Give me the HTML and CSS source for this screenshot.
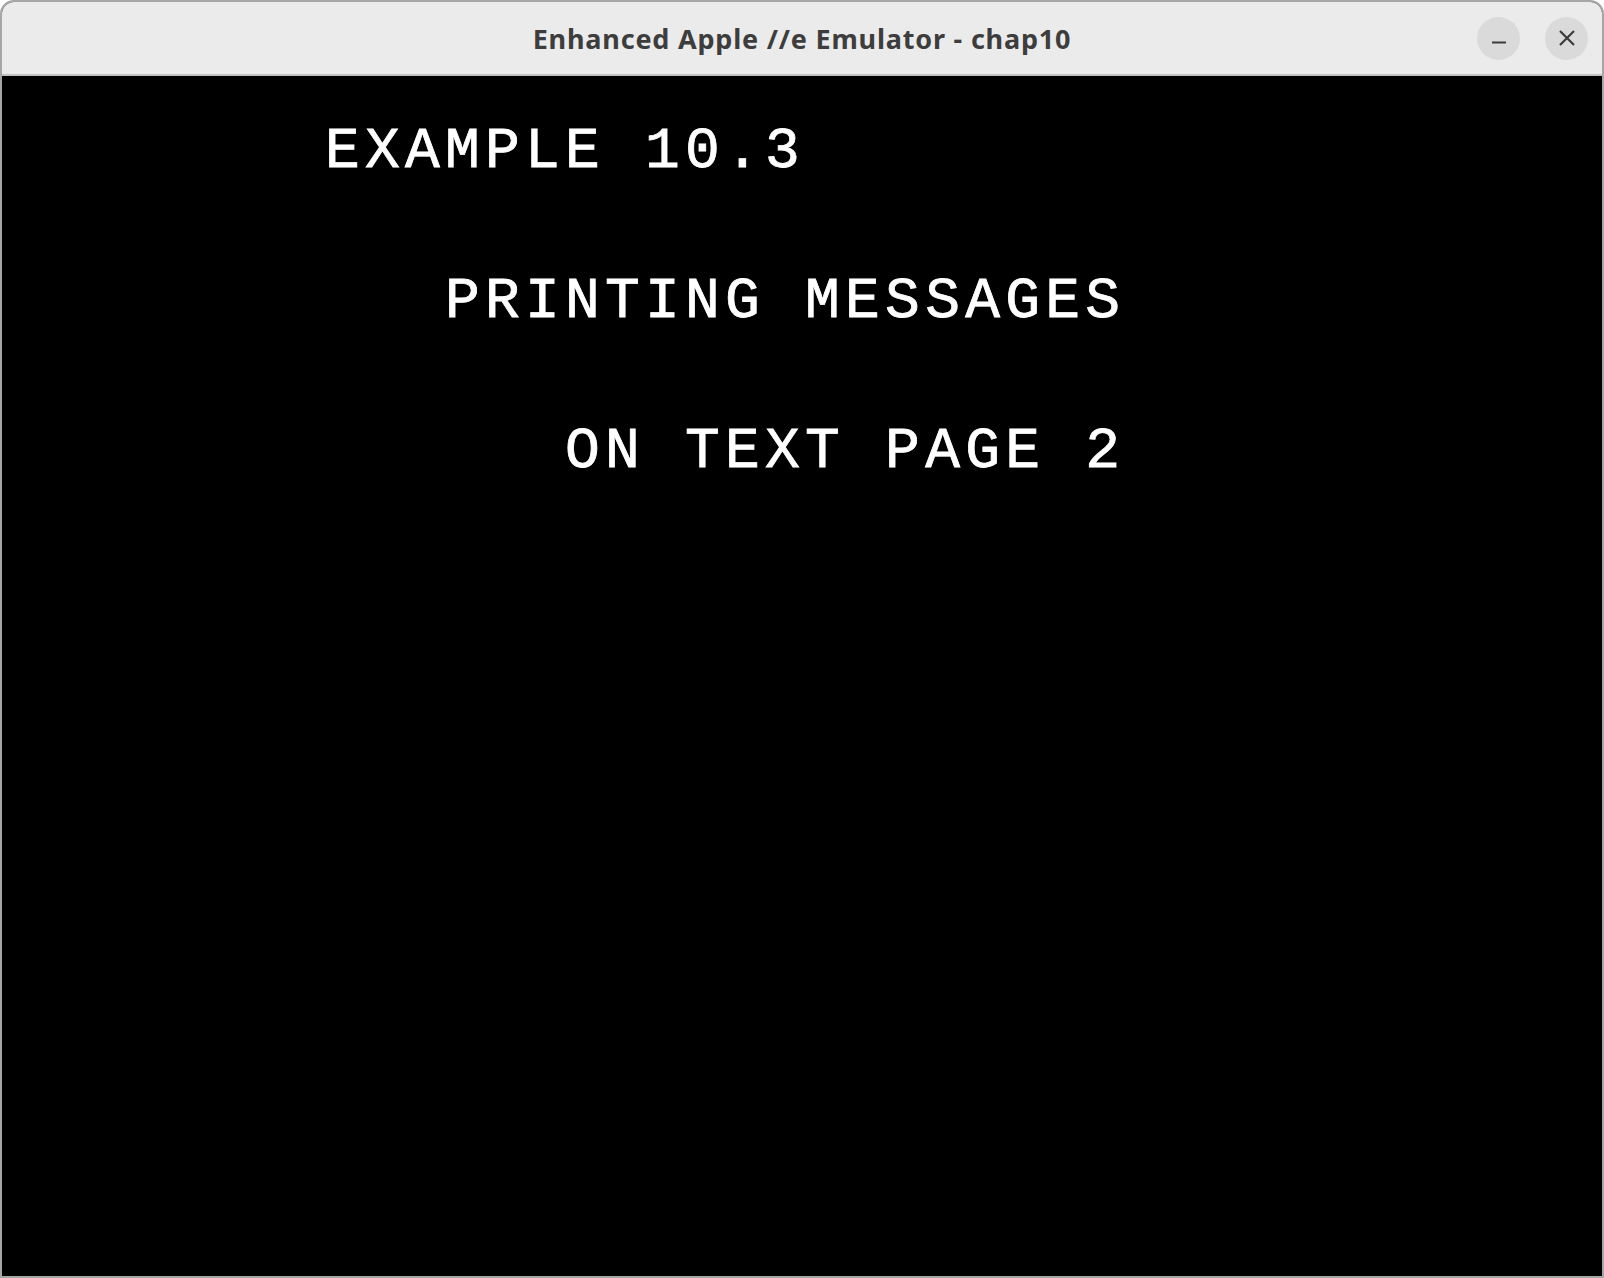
FILE: index.html
```html
<!DOCTYPE html>
<html>
<head>
<meta charset="utf-8">
<title>Enhanced Apple //e Emulator - chap10</title>
<link rel="stylesheet" href="styles.css">
</head>
<body>
<div class="window">
  <header class="titlebar">
    <div class="spacer"></div>
    <div class="title">Enhanced Apple //e Emulator - chap10</div>
    <div class="controls">
      <button class="ctl" aria-label="Minimize">
        <svg width="16" height="16" viewBox="0 0 16 16"><path d="M1 12.5 H15" stroke="#3c3c3c" stroke-width="2"/></svg>
      </button>
      <button class="ctl" aria-label="Close">
        <svg width="16" height="16" viewBox="0 0 16 16"><path d="M1 1 L15 15 M15 1 L1 15" stroke="#3c3c3c" stroke-width="2.2"/></svg>
      </button>
    </div>
  </header>
  <main class="screen"><pre class="text">

        EXAMPLE 10.3


           PRINTING MESSAGES


              ON TEXT PAGE 2</pre></main>
</div>
</body>
</html>
```

FILE: styles.css
```css
html, body {
  margin: 0;
  padding: 0;
  background: #ffffff;
}

.window {
  width: 1604px;
  height: 1278px;
  box-sizing: border-box;
  border: 2px solid #a6a6a6;
  border-radius: 14px 14px 0 0;
  overflow: hidden;
  display: flex;
  flex-direction: column;
  background: #000;
}

.titlebar {
  height: 72px;
  flex: none;
  background: #ebebeb;
  border-bottom: 2px solid #c2c2c2;
  display: grid;
  grid-template-columns: 1fr auto 1fr;
  align-items: center;
}

.title {
  font-family: "Noto Sans", "Open Sans", sans-serif;
  font-weight: 700;
  font-size: 27px;
  letter-spacing: 0.8px;
  color: #3d3d3d;
  padding-top: 1px;
  white-space: nowrap;
}

.controls {
  display: flex;
  justify-content: flex-end;
  gap: 25px;
  padding-right: 14px;
}

.ctl {
  width: 43px;
  height: 43px;
  border-radius: 50%;
  border: none;
  padding: 0;
  margin: 0;
  background: #dadada;
  display: flex;
  align-items: center;
  justify-content: center;
}

.ctl svg {
  display: block;
}

.screen {
  flex: 1;
  background: #000;
  overflow: hidden;
}

.text {
  margin: 0;
  padding-top: 1px;
  padding-left: 3px;
  font-family: "Liberation Mono", "DejaVu Sans Mono", monospace;
  font-weight: 400;
  font-size: 58px;
  letter-spacing: 5.2px;
  line-height: 50px;
  color: #ffffff;
  white-space: pre;
  -webkit-text-stroke: 0.8px #ffffff;
}
```
